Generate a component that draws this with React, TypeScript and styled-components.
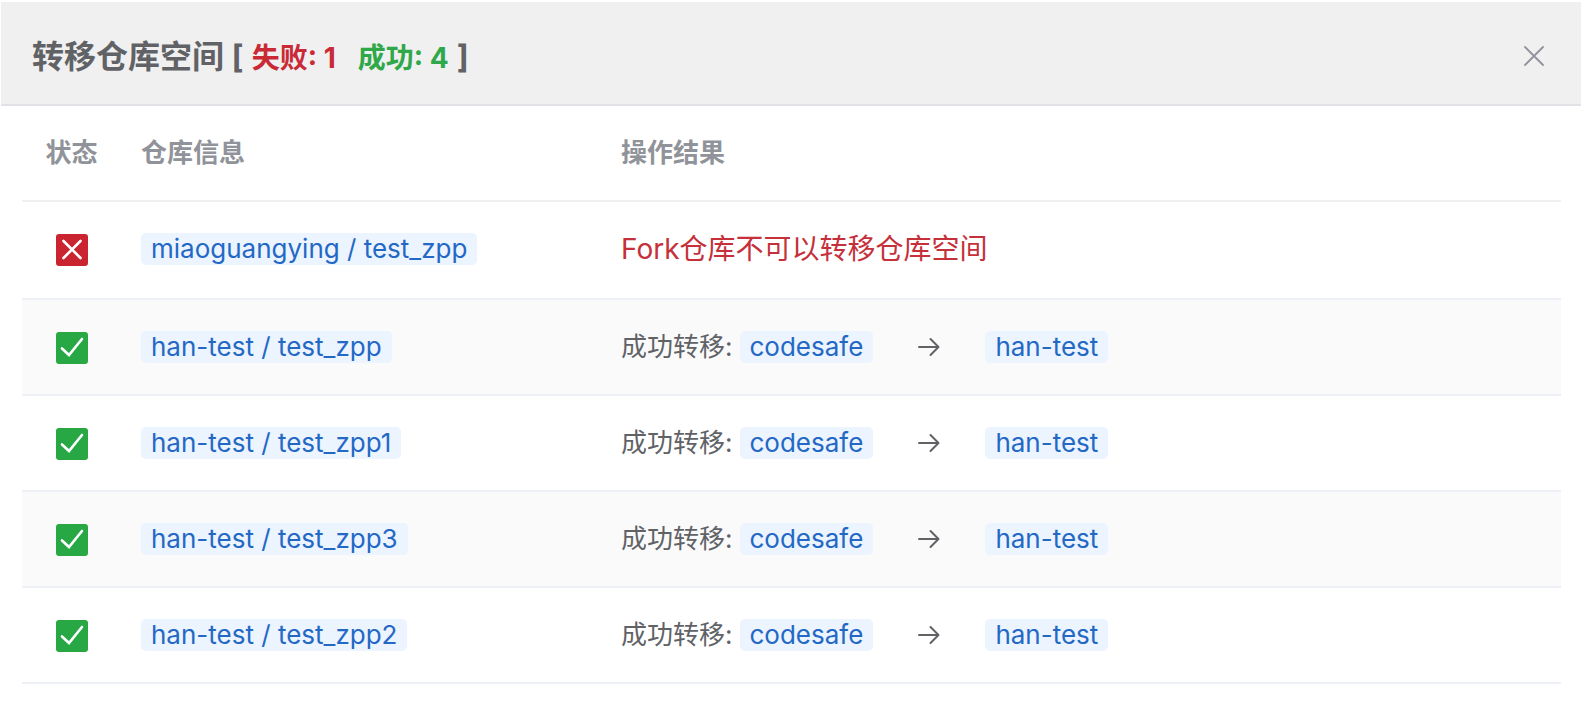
import React from "react";
import styled, { createGlobalStyle } from "styled-components";

const GlobalStyle = createGlobalStyle`
  * {
    box-sizing: border-box;
  }

  body {
    margin: 0;
    background: #fff;
    color: #606266;
    font-family: Inter, "Noto Sans CJK SC", sans-serif;
    font-size: 26px;
    line-height: 32px;
  }
`;

const Dialog = styled.section`
  padding: 2px 0 28px 1px;
`;

const Header = styled.header`
  display: flex;
  align-items: center;
  justify-content: space-between;
  height: 104px;
  padding: 6px 33px 0 31px;
  background: #f0f0f1;
  border-bottom: 2px solid #e1e2e6;
`;

const Title = styled.h1`
  display: flex;
  align-items: baseline;
  gap: 8px;
  margin: 0;
  padding-top: 2px;
  font-size: 32px;
  line-height: 40px;
  font-weight: 700;
`;

const Count = styled.span<{ $ok?: boolean }>`
  color: ${({ $ok }) => ($ok ? "#2fa84a" : "#c92a35")};
  font-size: 28px;
  margin-right: ${({ $ok }) => ($ok ? "0" : "14px")};
`;

const CloseButton = styled.button`
  display: flex;
  padding: 4px;
  border: 0;
  background: none;
  color: #909399;
  cursor: pointer;
`;

const TableWrap = styled.div`
  padding: 0 20px 0 21px;
`;

const Table = styled.table`
  width: 100%;
  table-layout: fixed;
  border-collapse: separate;
  border-spacing: 0;
`;

const StatusCol = styled.col`
  width: 99px;
`;

const RepoCol = styled.col`
  width: 480px;
`;

const HeadCell = styled.th<{ $center?: boolean }>`
  height: 96px;
  padding: 0 ${({ $center }) => ($center ? "0" : "20px")};
  border-bottom: 2px solid #f0f0f2;
  color: #909399;
  font-weight: 700;
  text-align: ${({ $center }) => ($center ? "center" : "left")};
`;

const Cell = styled.td`
  padding: 0 20px;
  border-bottom: 2px solid #eef0f7;
`;

const StatusCell = styled(Cell)`
  padding: 2px 0 0;
`;

const Row = styled.tr`
  height: 96px;

  &:first-child {
    height: 98px;
  }

  &:first-child > ${Cell} {
    padding-bottom: 2px;
  }

  &:nth-child(even) {
    background: #fafafb;
  }
`;

const StatusIcon = styled.svg`
  display: block;
  margin: 0 auto;
`;

const Line = styled.div`
  display: flex;
  align-items: center;
`;

const Tag = styled.a`
  display: inline-block;
  padding: 0 10px;
  border-radius: 5px;
  background: #ebf4ff;
  color: #2468c5;
  text-decoration: none;
  white-space: nowrap;
`;

const Label = styled.span`
  margin-right: 7px;
`;

const Arrow = styled.svg`
  margin: 0 45px;
`;

const ErrorText = styled.span`
  color: #c5303a;
  font-size: 28px;
`;

type Result = { repo: string; from?: string; to?: string; error?: string };

const results: Result[] = [
  { repo: "miaoguangying / test_zpp", error: "Fork仓库不可以转移仓库空间" },
  { repo: "han-test / test_zpp", from: "codesafe", to: "han-test" },
  { repo: "han-test / test_zpp1", from: "codesafe", to: "han-test" },
  { repo: "han-test / test_zpp3", from: "codesafe", to: "han-test" },
  { repo: "han-test / test_zpp2", from: "codesafe", to: "han-test" },
];

function Status({ ok }: { ok: boolean }) {
  return (
    <StatusIcon width="32" height="32" viewBox="0 0 32 32" role="img" aria-label={ok ? "成功" : "失败"}>
      <rect width="32" height="32" rx="3" fill={ok ? "#28a745" : "#cb2431"} />
      <path
        d={ok ? "M6 16.5 13 23 26 7" : "M7.500 7 24.500 24M24.500 7 7.500 24"}
        fill="none"
        stroke="#fff"
        strokeWidth="2.600"
        strokeLinecap="round"
      />
    </StatusIcon>
  );
}

export default function App() {
  const failed = results.filter((r) => r.error).length;
  return (
    <>
      <GlobalStyle />
      <Dialog>
        <Header>
          <Title>
            <span>转移仓库空间 [</span>
            <Count>失败: {failed}</Count>
            <Count $ok>成功: {results.length - failed}</Count>
            <span>]</span>
          </Title>
          <CloseButton type="button" aria-label="关闭">
            <svg width="20" height="20" viewBox="0 0 20 20" fill="none" stroke="currentColor" strokeWidth="1.800" strokeLinecap="round">
              <path d="M1 1 19 19M19 1 1 19" />
            </svg>
          </CloseButton>
        </Header>
        <TableWrap>
          <Table>
            <colgroup>
              <StatusCol />
              <RepoCol />
              <col />
            </colgroup>
            <thead>
              <tr>
                <HeadCell $center>状态</HeadCell>
                <HeadCell>仓库信息</HeadCell>
                <HeadCell>操作结果</HeadCell>
              </tr>
            </thead>
            <tbody>
              {results.map((r) => (
                <Row key={r.repo}>
                  <StatusCell>
                    <Status ok={!r.error} />
                  </StatusCell>
                  <Cell>
                    <Line>
                      <Tag href="#">{r.repo}</Tag>
                    </Line>
                  </Cell>
                  <Cell>
                    {r.error ? (
                      <ErrorText>{r.error}</ErrorText>
                    ) : (
                      <Line>
                        <Label>成功转移:</Label>
                        <Tag href="#">{r.from}</Tag>
                        <Arrow width="22" height="20" viewBox="0 0 22 20" fill="none" stroke="#606266" strokeWidth="2" strokeLinecap="round" strokeLinejoin="round" aria-hidden="true">
                          <path d="M1 10H20M12.500 2 20.500 10 12.500 18" />
                        </Arrow>
                        <Tag href="#">{r.to}</Tag>
                      </Line>
                    )}
                  </Cell>
                </Row>
              ))}
            </tbody>
          </Table>
        </TableWrap>
      </Dialog>
    </>
  );
}
